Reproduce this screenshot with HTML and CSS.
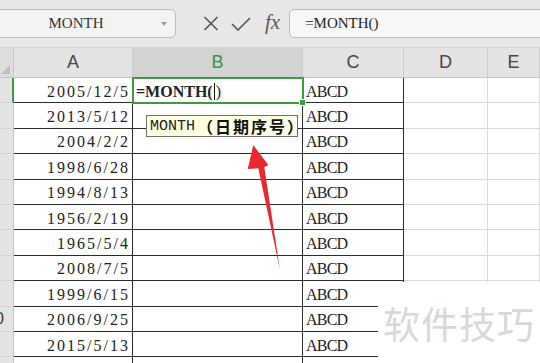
FILE: index.html
```html
<!DOCTYPE html>
<html lang="zh-CN">
<head>
    <meta charset="UTF-8">
    <title>MONTH</title>
    <link rel="stylesheet" href="styles.css">
</head>
<body>
    <div class="toolbar">
        <div class="name-box">
            <span class="name-text">MONTH</span>
            <span class="drop"></span>
        </div>
        <svg class="icon icon-x" width="16" height="15" viewBox="0 0 16 15">
            <path d="M1.5 1 L14.5 14 M14.5 1 L1.5 14" />
        </svg>
        <svg class="icon icon-check" width="20" height="14" viewBox="0 0 20 14">
            <path d="M1 7 L7 13 L19 1" />
        </svg>
        <span class="fx">fx</span>
        <div class="formula-box">=MONTH()</div>
    </div>

    <div class="sheet">
        <div class="grid">
            <!-- column headers -->
            <div class="corner"></div>
            <div class="col-head">A</div>
            <div class="col-head active">B</div>
            <div class="col-head">C</div>
            <div class="col-head">D</div>
            <div class="col-head">E</div>

            <!-- row 1 -->
            <div class="row-head active"></div>
            <div class="cell t date">2005/12/5</div>
            <div class="cell t selected"><b>=MONTH(</b><span class="caret"></span>)</div>
            <div class="cell t text">ABCD</div>
            <div class="cell"></div>
            <div class="cell"></div>

            <div class="row-head"></div>
            <div class="cell t date">2013/5/12</div>
            <div class="cell t"></div>
            <div class="cell t text">ABCD</div>
            <div class="cell"></div>
            <div class="cell"></div>

            <div class="row-head"></div>
            <div class="cell t date">2004/2/2</div>
            <div class="cell t"></div>
            <div class="cell t text">ABCD</div>
            <div class="cell"></div>
            <div class="cell"></div>

            <div class="row-head"></div>
            <div class="cell t date">1998/6/28</div>
            <div class="cell t"></div>
            <div class="cell t text">ABCD</div>
            <div class="cell"></div>
            <div class="cell"></div>

            <div class="row-head"></div>
            <div class="cell t date">1994/8/13</div>
            <div class="cell t"></div>
            <div class="cell t text">ABCD</div>
            <div class="cell"></div>
            <div class="cell"></div>

            <div class="row-head"></div>
            <div class="cell t date">1956/2/19</div>
            <div class="cell t"></div>
            <div class="cell t text">ABCD</div>
            <div class="cell"></div>
            <div class="cell"></div>

            <div class="row-head"></div>
            <div class="cell t date">1965/5/4</div>
            <div class="cell t"></div>
            <div class="cell t text">ABCD</div>
            <div class="cell"></div>
            <div class="cell"></div>

            <div class="row-head"></div>
            <div class="cell t date">2008/7/5</div>
            <div class="cell t"></div>
            <div class="cell t text">ABCD</div>
            <div class="cell"></div>
            <div class="cell"></div>

            <div class="row-head"></div>
            <div class="cell t date">1999/6/15</div>
            <div class="cell t"></div>
            <div class="cell t text">ABCD</div>
            <div class="cell"></div>
            <div class="cell"></div>

            <div class="row-head"><span>10</span></div>
            <div class="cell t date">2006/9/25</div>
            <div class="cell t"></div>
            <div class="cell t text">ABCD</div>
            <div class="cell"></div>
            <div class="cell"></div>

            <div class="row-head"></div>
            <div class="cell t date">2015/5/13</div>
            <div class="cell t"></div>
            <div class="cell t text">ABCD</div>
            <div class="cell"></div>
            <div class="cell"></div>

            <div class="row-head"></div>
            <div class="cell t"></div>
            <div class="cell t"></div>
            <div class="cell"></div>
            <div class="cell"></div>
            <div class="cell"></div>
        </div>

        <div class="tooltip">
            <span class="tip-name">MONTH</span><span class="tip-arg">（日期序号）</span>
        </div>

        <svg class="arrow" width="540" height="315" viewBox="0 0 540 315">
            <polygon points="253.3,97 247.7,121 258.3,120.3 280,222 264.3,119.3 268.3,117" />
        </svg>

        <div class="watermark">软件技巧</div>
    </div>
</body>
</html>
```

FILE: styles.css
```css
body {
    margin: 0;
    width: 540px;
    height: 363px;
    overflow: hidden;
    background: #ffffff;
    font-family: "Liberation Serif", serif;
    color: #222;
}

/* formula bar */
.toolbar {
    display: flex;
    align-items: center;
    height: 48px;
    box-sizing: border-box;
    background: #e8e8e8;
    border-bottom: 1px solid #d4d4d4;
}

.name-box {
    display: flex;
    align-items: center;
    width: 186px;
    height: 29px;
    margin-left: -10px;
    box-sizing: border-box;
    background: #f3f3f3;
    border: 1px solid #bcbcbc;
    border-radius: 5px;
}

.name-text {
    flex: 1;
    text-align: center;
    font-size: 15px;
    color: #333;
}

.drop {
    width: 0;
    height: 0;
    margin-right: 8px;
    border-left: 3px solid transparent;
    border-right: 3px solid transparent;
    border-top: 4px solid #9a9a9a;
}

.icon {
    fill: none;
    stroke: #555;
    stroke-width: 1.6;
}

.icon-x {
    margin-left: 27px;
}

.icon-check {
    margin-left: 12px;
}

.fx {
    margin-left: 14px;
    font-style: italic;
    font-size: 21px;
    color: #5a5a5a;
    line-height: 1;
    padding-bottom: 3px;
}

.formula-box {
    flex: 1;
    height: 29px;
    margin-left: 9px;
    margin-right: -10px;
    padding-left: 15px;
    box-sizing: border-box;
    display: flex;
    align-items: center;
    background: #f7f7f7;
    border: 1px solid #bcbcbc;
    border-radius: 5px;
    font-size: 15px;
    color: #222;
}

/* sheet */
.sheet {
    position: relative;
    height: 315px;
    overflow: hidden;
}

.grid {
    display: grid;
    grid-template-columns: 14px 119px 170px 101px 84px 1fr;
    grid-template-rows: 30px repeat(12, 25.4px);
}

.corner {
    position: relative;
    background: #dedede;
    border-right: 1px solid #c8c8c8;
    border-bottom: 1px solid #c4c4c4;
}

.corner::after {
    content: "";
    position: absolute;
    right: 3px;
    bottom: 3px;
    border-left: 9px solid transparent;
    border-bottom: 9px solid #bdbdbd;
}

.col-head {
    display: flex;
    align-items: center;
    justify-content: center;
    background: #e4e4e4;
    border-right: 1px solid #cbcbcb;
    border-bottom: 1px solid #c4c4c4;
    font-family: "Liberation Sans", sans-serif;
    font-size: 18px;
    color: #474747;
}

.col-head.active {
    background: #d3d3d3;
    color: #3e9240;
}

.row-head {
    display: flex;
    align-items: center;
    justify-content: flex-end;
    overflow: hidden;
    box-sizing: border-box;
    background: #e4e4e4;
    border-right: 1px solid #c6c6c6;
    border-bottom: 1px solid #d4d4d4;
    font-family: "Liberation Sans", sans-serif;
    font-size: 16px;
    color: #333;
    white-space: nowrap;
}

.row-head span {
    flex-shrink: 0;
    margin-right: 9px;
}

.row-head.active {
    border-right: 2px solid #3e9a40;
}

.cell {
    box-sizing: border-box;
    border-right: 1px solid #dadada;
    border-bottom: 1px solid #dadada;
    display: flex;
    align-items: center;
    padding-top: 3px;
    font-size: 16px;
    white-space: nowrap;
}

.cell.t {
    border-color: #2b2b2b;
}

.date {
    justify-content: flex-end;
    padding-right: 2px;
    letter-spacing: 2px;
}

.text {
    padding-left: 3px;
    letter-spacing: -0.8px;
}

.selected {
    position: relative;
    z-index: 2;
    padding-left: 3px;
    outline: 2px solid #3e9a40;
    outline-offset: -1px;
}

.selected::after {
    content: "";
    position: absolute;
    right: -4px;
    bottom: -4px;
    width: 5px;
    height: 5px;
    background: #3e9a40;
    border: 1px solid #ffffff;
}

.caret {
    display: inline-block;
    width: 1px;
    height: 17px;
    margin: 0 1px;
    background: #111;
}

/* function hint */
.tooltip {
    position: absolute;
    left: 146px;
    top: 67px;
    width: 152px;
    height: 22px;
    box-sizing: border-box;
    display: flex;
    align-items: center;
    padding-left: 3px;
    background: #ffffe1;
    border: 1px solid #707070;
    z-index: 3;
    white-space: nowrap;
}

.tip-name {
    font-family: "Liberation Mono", monospace;
    font-size: 15px;
    color: #222;
}

.tip-arg {
    font-family: "Noto Sans CJK SC", sans-serif;
    font-weight: bold;
    font-size: 16px;
    letter-spacing: 2px;
    color: #111;
    margin-left: 2px;
}

.arrow {
    position: absolute;
    left: 0;
    top: 0;
    z-index: 4;
    fill: #e8292f;
}

.watermark {
    position: absolute;
    left: 378px;
    top: 234px;
    right: 0;
    bottom: 0;
    display: flex;
    align-items: center;
    justify-content: center;
    background: #ffffff;
    font-family: "Noto Sans CJK SC", sans-serif;
    font-size: 37px;
    letter-spacing: 1px;
    color: #d8d8d8;
    z-index: 5;
}
```
